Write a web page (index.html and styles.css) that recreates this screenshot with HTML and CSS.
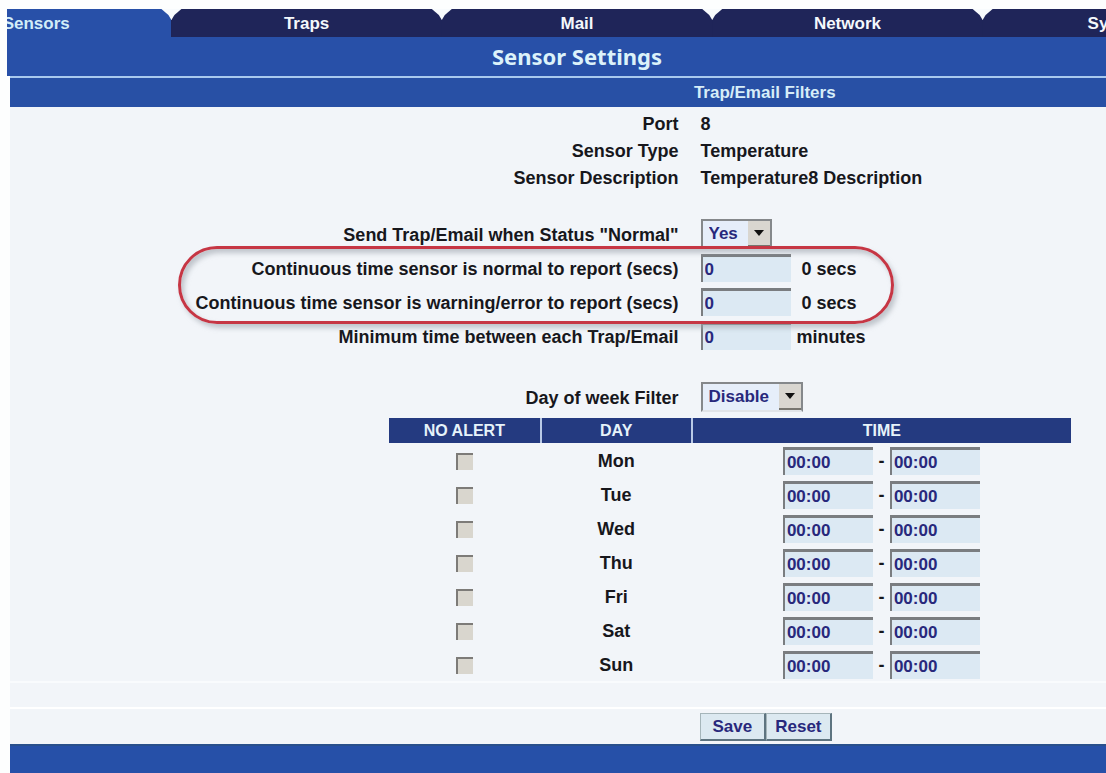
FILE: index.html
```html
<!DOCTYPE html>
<html lang="en">
<head>
<meta charset="utf-8">
<title>Sensor Settings</title>
<meta name="viewport" content="width=device-width, initial-scale=1">
<link rel="stylesheet" href="styles.css">
</head>
<body>
<header class="masthead">
  <div class="masthead-inner">
    <nav class="tabs" aria-label="Sections">
      <a class="tab tab-active" href="#sensors">Sensors</a>
      <a class="tab" href="#traps">Traps</a>
      <a class="tab" href="#mail">Mail</a>
      <a class="tab" href="#network">Network</a>
      <a class="tab" href="#system">System</a>
    </nav>
    <h1 class="title">Sensor Settings</h1>
  </div>
</header>
<main class="panel">
  <h2 class="section-bar">Trap/Email Filters</h2>
  <form class="form">
    <dl class="info">
      <div class="row"><dt class="label">Port</dt><dd class="value">8</dd></div>
      <div class="row"><dt class="label">Sensor Type</dt><dd class="value">Temperature</dd></div>
      <div class="row"><dt class="label">Sensor Description</dt><dd class="value">Temperature8 Description</dd></div>
    </dl>
    <div class="fields">
      <div class="row field">
        <label class="label" for="send">Send Trap/Email when Status "Normal"</label>
        <div class="value">
          <span class="picker">
            <select class="select select-short" id="send"><option>Yes</option><option>No</option></select>
            <span class="arrow"><svg width="10" height="6" viewBox="0 0 10 6" aria-hidden="true"><path d="M0 0h10L5 6z" fill="#111"/></svg></span>
          </span>
        </div>
      </div>
      <div class="highlight">
        <div class="row field">
          <label class="label" for="normal">Continuous time sensor is normal to report (secs)</label>
          <div class="value"><input class="input" id="normal" type="text" value="0"><span class="unit unit-secs">0 secs</span></div>
        </div>
        <div class="row field">
          <label class="label" for="error">Continuous time sensor is warning/error to report (secs)</label>
          <div class="value"><input class="input" id="error" type="text" value="0"><span class="unit unit-secs">0 secs</span></div>
        </div>
      </div>
      <div class="row field">
        <label class="label" for="between">Minimum time between each Trap/Email</label>
        <div class="value"><input class="input" id="between" type="text" value="0"><span class="unit">minutes</span></div>
      </div>
    </div>
    <div class="row field">
      <label class="label" for="filter">Day of week Filter</label>
      <div class="value">
        <span class="picker">
          <select class="select select-long" id="filter"><option>Disable</option><option>Enable</option></select>
          <span class="arrow"><svg width="10" height="6" viewBox="0 0 10 6" aria-hidden="true"><path d="M0 0h10L5 6z" fill="#111"/></svg></span>
        </span>
      </div>
    </div>
    <div class="schedule">
      <table class="days">
        <thead><tr><th class="col-alert" scope="col">NO ALERT</th><th class="col-day" scope="col">DAY</th><th scope="col">TIME</th></tr></thead>
        <tbody>
          <tr><td><input class="check" type="checkbox" aria-label="No alert Mon"></td><td>Mon</td><td><div class="times"><input class="input" type="text" value="00:00" aria-label="Mon from"><span>-</span><input class="input" type="text" value="00:00" aria-label="Mon to"></div></td></tr>
          <tr><td><input class="check" type="checkbox" aria-label="No alert Tue"></td><td>Tue</td><td><div class="times"><input class="input" type="text" value="00:00" aria-label="Tue from"><span>-</span><input class="input" type="text" value="00:00" aria-label="Tue to"></div></td></tr>
          <tr><td><input class="check" type="checkbox" aria-label="No alert Wed"></td><td>Wed</td><td><div class="times"><input class="input" type="text" value="00:00" aria-label="Wed from"><span>-</span><input class="input" type="text" value="00:00" aria-label="Wed to"></div></td></tr>
          <tr><td><input class="check" type="checkbox" aria-label="No alert Thu"></td><td>Thu</td><td><div class="times"><input class="input" type="text" value="00:00" aria-label="Thu from"><span>-</span><input class="input" type="text" value="00:00" aria-label="Thu to"></div></td></tr>
          <tr><td><input class="check" type="checkbox" aria-label="No alert Fri"></td><td>Fri</td><td><div class="times"><input class="input" type="text" value="00:00" aria-label="Fri from"><span>-</span><input class="input" type="text" value="00:00" aria-label="Fri to"></div></td></tr>
          <tr><td><input class="check" type="checkbox" aria-label="No alert Sat"></td><td>Sat</td><td><div class="times"><input class="input" type="text" value="00:00" aria-label="Sat from"><span>-</span><input class="input" type="text" value="00:00" aria-label="Sat to"></div></td></tr>
          <tr><td><input class="check" type="checkbox" aria-label="No alert Sun"></td><td>Sun</td><td><div class="times"><input class="input" type="text" value="00:00" aria-label="Sun from"><span>-</span><input class="input" type="text" value="00:00" aria-label="Sun to"></div></td></tr>
        </tbody>
      </table>
    </div>
    <div class="actions">
      <button class="button" type="button">Save</button><button class="button" type="reset">Reset</button>
    </div>
  </form>
</main>
<footer class="footer"></footer>
</body>
</html>
```
FILE: styles.css
```css
* { box-sizing: border-box; }

body {
  margin: 0;
  padding-top: 9px;
  min-height: 100vh;
  display: flex;
  flex-direction: column;
  overflow-x: hidden;
  background: #fdfefe;
  color: #17171c;
  font: bold 17px/20px "Liberation Sans", Arial, sans-serif;
}

/* The header is wider than the window and clipped on both sides. */
.masthead {
  margin-left: 7px;
  overflow: hidden;
  background: #2850a8;
}
.masthead-inner {
  width: calc(100% + 253px);
  margin-left: -106px;
}
.tabs {
  display: flex;
  background: linear-gradient(#f8fbfd 11px, #1f2559 11px);
}
.tab {
  flex: 1;
  height: 28px;
  padding-top: 5px;
  text-align: center;
  text-decoration: none;
  color: #f4f8fc;
  background: #1f2559;
  clip-path: polygon(0 11px, 3px 6px, 10px 0, calc(100% - 10px) 0, calc(100% - 3px) 6px, 100% 11px, 100% 100%, 0 100%);
}
.tab-active { background: #2850a8; color: #d3edf8; }
.title {
  margin: 0;
  height: 39px;
  text-align: center;
  color: #dcf2fa;
  font: bold 22px/38px "Noto Sans", "Open Sans", sans-serif;
}

.panel {
  margin-left: 10px;
  background: #f2f5f9;
}
.section-bar {
  margin: 0;
  padding: 5px 0 4px 62.4%;
  border-top: 2px solid #a9c9ee;
  background: #2850a5;
  color: #d6edf8;
  font-size: 17px;
  line-height: 20px;
}

.form { display: flex; flex-direction: column; padding-top: 3px; }
.row { display: flex; align-items: center; font-size: 18px; }
.info { margin: 0 0 26px; }
.info .row { height: 27px; }
.field { height: 34px; }
.label { flex: 0 0 62%; padding-right: 11px; text-align: right; }
.value { flex: 1; display: flex; align-items: center; margin: 0; padding-left: 11px; }
.fields { margin-bottom: 27px; }
.field .label, .unit { padding-top: 2px; }

.highlight { position: relative; }
.highlight::after {
  content: "";
  position: absolute;
  left: 15.3%;
  right: 19.3%;
  top: -5px;
  bottom: -5px;
  border: 3px solid #c63644;
  border-radius: 40px;
  box-shadow: 3px 4px 5px #9fa5ae99, inset 3px 4px 5px #9fa5ae99;
  pointer-events: none;
}

.input, .select, .button {
  font: bold 17px/20px "Liberation Sans", Arial, sans-serif;
  color: #28287c;
}
.input {
  width: 90px;
  height: 28px;
  padding: 0 0 0 2px;
  border: 0 solid #7a7d80;
  border-width: 3px 0 0 2px;
  border-radius: 0;
  background: #dce9f3;
}
.unit { margin-left: 6px; }
.unit-secs { margin-left: 11px; }

.picker { position: relative; display: flex; }
.select {
  appearance: none;
  height: 30px;
  padding: 0 22px 0 6px;
  border: 2px solid #85888b;
  border-bottom-color: #e1e4e8;
  border-radius: 0;
  background: #e6eefa;
}
.select-short { width: 71px; }
.select-long { width: 102px; }
.arrow {
  position: absolute;
  top: 2px;
  right: 2px;
  bottom: 2px;
  width: 22px;
  display: grid;
  place-items: center;
  background: #d9d6d0;
  border-bottom: 2px solid #77756f;
  pointer-events: none;
}

.schedule { padding-top: 4px; border-bottom: 2px solid #f9fbfd; }
.days {
  width: 62.2%;
  margin-left: 34.6%;
  border-collapse: collapse;
  table-layout: fixed;
  text-align: center;
  font-size: 18px;
}
.days th {
  height: 25px;
  padding: 0;
  background: #243a80;
  color: #e6f3fa;
  font-size: 16px;
}
.days th + th { border-left: 2px solid #b9c9e6; }
.col-alert, .col-day { width: 22.2%; }
.days td { height: 34px; padding: 2px 0 0; }
.times { display: flex; align-items: center; justify-content: center; }
.times span { width: 17px; line-height: 32px; }
.check {
  appearance: none;
  display: block;
  width: 17px;
  height: 17px;
  margin: 0 auto;
  border: 0 solid #7d7b78;
  border-width: 2px 0 0 2px;
  background: #d9d6ce;
}

.actions {
  display: flex;
  margin-top: 24px;
  padding: 4px 0 3px calc(62% + 10px);
  border-top: 2px solid #fff;
}
.button {
  height: 28px;
  padding: 0 12px;
  border: 1px solid #a5b5ba;
  border-right: 2px solid #5e7480;
  border-bottom: 2px solid #5e7480;
  background: #dce9f1;
}
.button + .button { padding: 0 8px; }

.footer {
  flex: 1;
  min-height: 30px;
  margin-left: 10px;
  border-top: 2px solid #29508c;
  background: #2650a8;
}
```
